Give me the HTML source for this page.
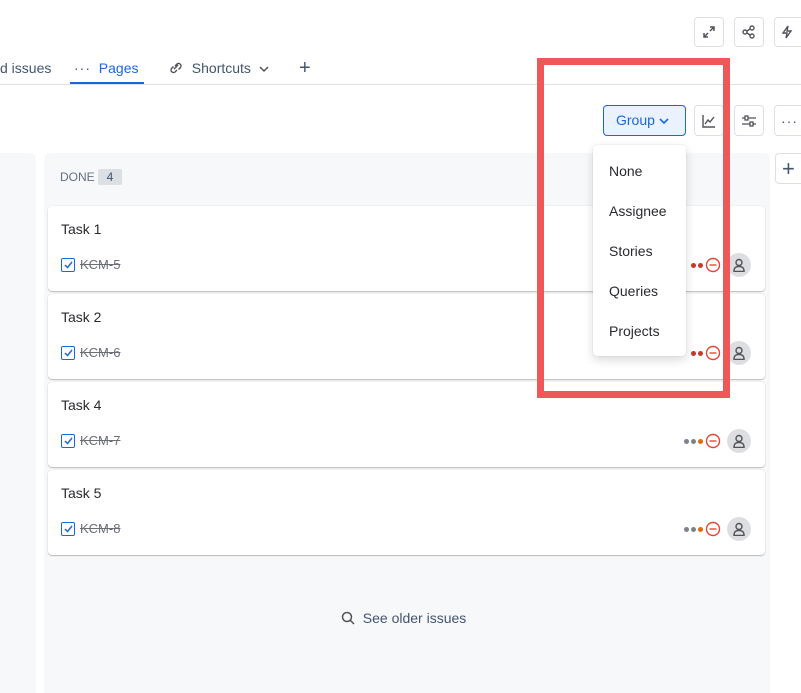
<html><head><style>
body{margin:0;width:801px;height:686px;overflow:hidden;background:#fff;font-family:"Liberation Sans",sans-serif;position:relative;color:#292a2e}
.a{position:absolute}
.ib{position:absolute;width:30px;height:30px;border:1px solid #dcdfe4;border-radius:4px;box-sizing:border-box;background:#fff;display:flex;align-items:center;justify-content:center}
.card{position:absolute;left:48px;width:717px;height:85px;background:#fff;border-radius:4px;box-shadow:0 1px 1px #bbb,0 0 1px #ccc}
.card .t{position:absolute;left:13px;top:15px;font-size:14px}
.card .k{position:absolute;left:13px;top:51px;font-size:13px;color:#555;display:flex;align-items:center;gap:5px}
.cb{width:14px;height:14px;border:1.5px solid #1868db;border-radius:2px;box-sizing:border-box;display:inline-flex;align-items:center;justify-content:center}
.k s{color:#6b6e76}
.pr{position:absolute;right:14px;top:47px;display:flex;align-items:center;gap:3px}
.d{width:5px;height:5px;border-radius:50%;display:inline-block;margin-right:-1px}
.av{width:24px;height:24px;border-radius:50%;background:#dddee1;display:flex;align-items:center;justify-content:center;margin-left:3px}
.menu div{height:40px;line-height:40px;padding-left:16px;font-size:14px}
</style></head><body>
<div class="ib" style="left:694px;top:17px"><svg width="16" height="16" fill="none" stroke="#505258" stroke-width="1.5"><path d="M9 3h4v4M13 3L9 7M7 13H3V9M3 13l4-4"/></svg></div>
<div class="ib" style="left:734px;top:17px"><svg width="16" height="16" fill="none" stroke="#505258" stroke-width="1.4"><circle cx="4" cy="8" r="2"/><circle cx="11" cy="4" r="2"/><circle cx="11" cy="12" r="2"/><path d="M6 7l3-2M6 9l3 2"/></svg></div>
<div class="ib" style="left:774px;top:17px;width:40px"><svg width="16" height="16" fill="none" stroke="#505258" stroke-width="1.4" style="margin-left:-14px"><path d="M9 2L4 9h4l-1 5 5-7H8z"/></svg></div>
<div class="a" style="left:0;top:60px;font-size:14px;color:#44546f">d issues</div>
<div class="a" style="left:74px;top:60px;font-size:14px;color:#1868db"><span style="color:#44546f;letter-spacing:1px">···</span>&nbsp; Pages</div>
<div class="a" style="left:70px;top:82px;width:74px;height:3px;background:#1868db"></div>
<div class="a" style="left:168px;top:60px;font-size:14px;color:#44546f"><svg width="16" height="14" fill="none" stroke="#505258" stroke-width="1.4" style="vertical-align:-2px"><path d="M7 5l2-2a2.5 2.5 0 013.5 3.5l-2 2M9 9l-2 2A2.5 2.5 0 013.5 7.5l2-2M6 8l4-4"/></svg> &nbsp;Shortcuts &nbsp;<svg width="10" height="8" fill="none" stroke="#505258" stroke-width="1.5"><path d="M1 2l4 4 4-4"/></svg></div>
<div class="a" style="left:299px;top:58px;font-size:20px;color:#44546f;line-height:20px">+</div>
<div class="a" style="left:0;top:84px;width:801px;height:1px;background:#dcdfe4"></div>
<div class="a" style="left:603px;top:105px;width:83px;height:31px;box-sizing:border-box;border:1px solid #1868db;border-radius:4px;background:#e9f2fe;color:#1868db;font-size:14px;line-height:29px;padding-left:12px">Group <svg width="10" height="8" fill="none" stroke="#1868db" stroke-width="1.6"><path d="M1 2l4 4 4-4"/></svg></div>
<div class="ib" style="left:694px;top:105px;height:31px"><svg width="16" height="16" fill="none" stroke="#505258" stroke-width="1.4"><path d="M2 2v12h12M4 11l3-4 2 2 4-5"/></svg></div>
<div class="ib" style="left:734px;top:105px;height:31px"><svg width="16" height="16" fill="none" stroke="#505258" stroke-width="1.3"><path d="M1 5h14M1 11h14"/><rect x="4" y="3" width="3" height="4" fill="#fff"/><rect x="9" y="9" width="3" height="4" fill="#fff"/></svg></div>
<div class="ib" style="left:774px;top:105px;height:31px;width:40px;justify-content:flex-start;padding-left:6px;color:#44546f;font-size:14px;letter-spacing:1px">···</div>
<div class="a" style="left:0;top:153px;width:36px;height:540px;background:#f7f8f9;border-radius:0 6px 0 0"></div>
<div class="a" style="left:44px;top:153px;width:726px;height:540px;background:#f7f8f9;border-radius:6px 6px 0 0"></div>
<div class="a" style="left:60px;top:170px;font-size:12px;color:#626f86">DONE</div>
<div class="a" style="left:98px;top:169px;width:24px;height:16px;background:#dcdfe4;border-radius:2px;font-size:12px;text-align:center;line-height:16px;color:#44546f">4</div>
<div class="ib" style="left:775px;top:153px;width:40px;height:31px;justify-content:flex-start;padding-left:6px;font-size:22px;color:#44546f">+</div>
<div class="card" style="top:206px"><div class="t">Task 1</div><div class="k"><span class="cb"><svg width="9" height="8" fill="none" stroke="#1868db" stroke-width="1.5"><path d="M1 4l2.5 2.5 4.5-5.5"/></svg></span><s>KCM-5</s></div><div class="pr"><span class="d" style="background:#c9372c"></span><span class="d" style="background:#c9372c"></span><svg width="16" height="16"><circle cx="8" cy="8" r="6.5" fill="none" stroke="#e34935" stroke-width="1.4"/><path d="M4.5 8h7" stroke="#e34935" stroke-width="1.4"/></svg><span class="av"><svg width="14" height="14" fill="none" stroke="#505258" stroke-width="1.4"><circle cx="7" cy="4.5" r="3"/><path d="M2 13.5v-1a4 4 0 014-4h2a4 4 0 014 4v1z"/></svg></span></div></div>
<div class="card" style="top:294px"><div class="t">Task 2</div><div class="k"><span class="cb"><svg width="9" height="8" fill="none" stroke="#1868db" stroke-width="1.5"><path d="M1 4l2.5 2.5 4.5-5.5"/></svg></span><s>KCM-6</s></div><div class="pr"><span class="d" style="background:#c9372c"></span><span class="d" style="background:#c9372c"></span><svg width="16" height="16"><circle cx="8" cy="8" r="6.5" fill="none" stroke="#e34935" stroke-width="1.4"/><path d="M4.5 8h7" stroke="#e34935" stroke-width="1.4"/></svg><span class="av"><svg width="14" height="14" fill="none" stroke="#505258" stroke-width="1.4"><circle cx="7" cy="4.5" r="3"/><path d="M2 13.5v-1a4 4 0 014-4h2a4 4 0 014 4v1z"/></svg></span></div></div>
<div class="card" style="top:382px"><div class="t">Task 4</div><div class="k"><span class="cb"><svg width="9" height="8" fill="none" stroke="#1868db" stroke-width="1.5"><path d="M1 4l2.5 2.5 4.5-5.5"/></svg></span><s>KCM-7</s></div><div class="pr"><span class="d" style="background:#7d818a"></span><span class="d" style="background:#7d818a"></span><span class="d" style="background:#e06c00"></span><svg width="16" height="16"><circle cx="8" cy="8" r="6.5" fill="none" stroke="#e34935" stroke-width="1.4"/><path d="M4.5 8h7" stroke="#e34935" stroke-width="1.4"/></svg><span class="av"><svg width="14" height="14" fill="none" stroke="#505258" stroke-width="1.4"><circle cx="7" cy="4.5" r="3"/><path d="M2 13.5v-1a4 4 0 014-4h2a4 4 0 014 4v1z"/></svg></span></div></div>
<div class="card" style="top:470px"><div class="t">Task 5</div><div class="k"><span class="cb"><svg width="9" height="8" fill="none" stroke="#1868db" stroke-width="1.5"><path d="M1 4l2.5 2.5 4.5-5.5"/></svg></span><s>KCM-8</s></div><div class="pr"><span class="d" style="background:#7d818a"></span><span class="d" style="background:#7d818a"></span><span class="d" style="background:#e06c00"></span><svg width="16" height="16"><circle cx="8" cy="8" r="6.5" fill="none" stroke="#e34935" stroke-width="1.4"/><path d="M4.5 8h7" stroke="#e34935" stroke-width="1.4"/></svg><span class="av"><svg width="14" height="14" fill="none" stroke="#505258" stroke-width="1.4"><circle cx="7" cy="4.5" r="3"/><path d="M2 13.5v-1a4 4 0 014-4h2a4 4 0 014 4v1z"/></svg></span></div></div>
<div class="a" style="left:341px;top:610px;font-size:14px;color:#44546f"><svg width="14" height="14" fill="none" stroke="#505258" stroke-width="1.5" style="vertical-align:-2px"><circle cx="6" cy="6" r="4.5"/><path d="M9.5 9.5l3.5 3.5"/></svg>&nbsp; See older issues</div>
<div class="a menu" style="left:593px;top:145px;width:93px;height:211px;background:#fff;border-radius:4px;box-shadow:0 4px 10px rgba(0,0,0,.15),0 0 1px rgba(0,0,0,.2);padding-top:6px;box-sizing:border-box"><div>None</div><div>Assignee</div><div>Stories</div><div>Queries</div><div>Projects</div></div>
<div class="a" style="left:537px;top:58px;width:193px;height:340px;box-sizing:border-box;border:7px solid #ef5858"></div>
</body></html>
